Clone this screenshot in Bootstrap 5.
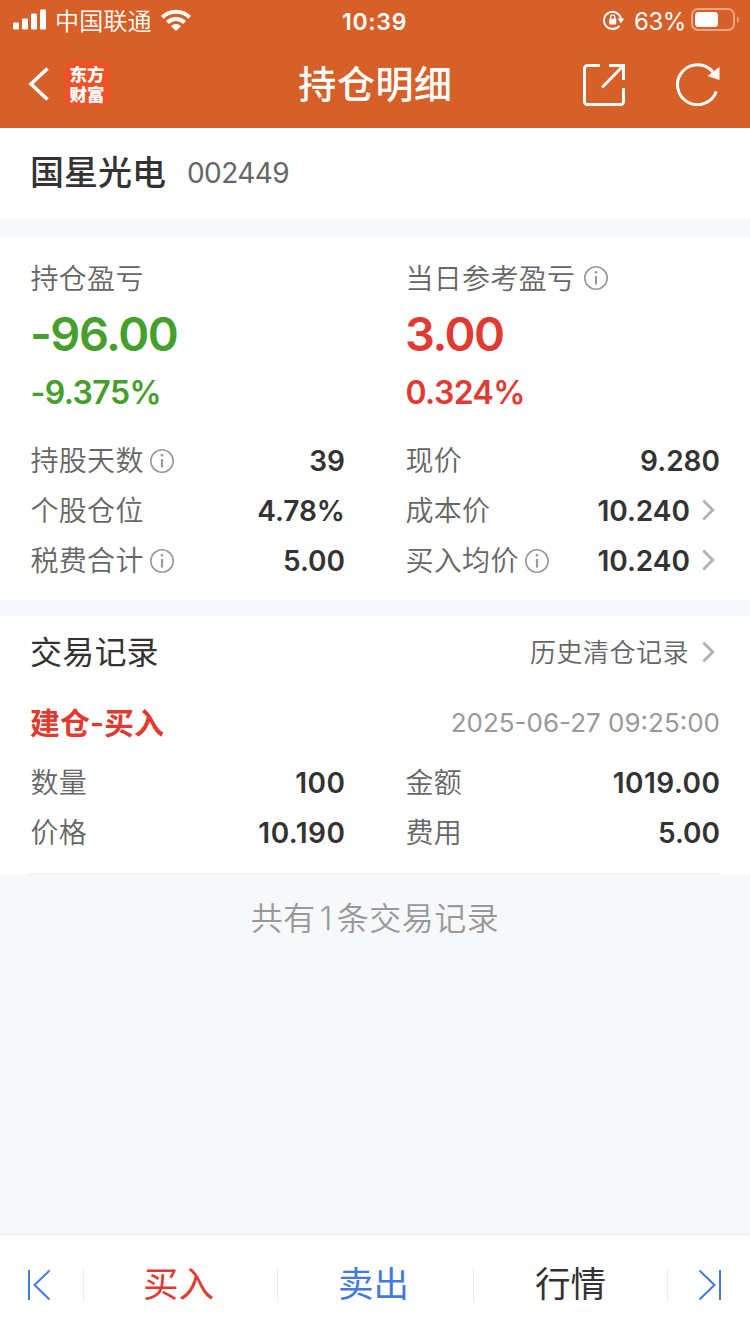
<!DOCTYPE html>
<html lang="zh-CN">
<head>
<meta charset="utf-8">
<meta name="viewport" content="width=device-width, initial-scale=1">
<title>持仓明细</title>
<link rel="stylesheet" href="https://cdn.jsdelivr.net/npm/bootstrap@5.3.0/dist/css/bootstrap.min.css">
<style>
  body { font-family: Inter, "Noto Sans CJK SC", sans-serif; background: #f7f8fa; color: #333; height: 1334px; overflow: hidden; }
  svg { display: block; flex: none; }
  .brand-bg { background: #d75f28; color: #fff; height: 128px; }
  .status-bar { height: 40px; font-size: 24px; line-height: 38px; padding: 0 10px 0 13px; }
  .status-bar span, .clock { padding-top: 3px; }
  .carrier { margin: 0 9px 0 8px; font-weight: 350; letter-spacing: .2px; }
  .clock { font-size: 23px; font-weight: 600; letter-spacing: .7px; margin-right: 4px; }
  .battery-text { margin: 0 5px 0 9px; font-size: 24px; letter-spacing: -.4px; }
  .title-bar { height: 88px; padding: 0 30px 0 28px; }
  .side { flex: 1 1 0; }
  .page-title { font-size: 38px; font-weight: 500; line-height: 88px; letter-spacing: .6px; padding-left: 3px; }
  .logo { width: 46px; height: 46px; border-radius: 9px; background: #ee5226; font: 900 17.5px/20px "Noto Sans CJK SC", sans-serif; padding-top: 3px; margin-left: 14px; }
  .logo div { height: 20px; }
  .share { margin-right: 51px; margin-top: 1px; }
  .panel { background: #fff; padding-left: 30px; padding-right: 30px; }
  .stock { height: 90px; margin-bottom: 20px; }
  .stock-name { font-size: 34px; font-weight: 500; line-height: 90px; height: 90px; }
  .stock-code { font-size: 28px; color: #666; margin-left: 21px; letter-spacing: -.6px; }
  .holding { height: 362px; padding-top: 20px; margin-bottom: 16px; }
  .records { height: 258px; }
  .pair { display: grid; grid-template-columns: 1fr 1fr; column-gap: 60px; }
  .tag { font-size: 28px; color: #666; font-weight: 350; letter-spacing: .3px; white-space: nowrap; padding-top: 2px; padding-left: .5px; }
  .head-line { height: 40px; }
  .big { font-size: 47px; font-weight: 600; line-height: 72px; height: 72px; letter-spacing: -1.5px; }
  .pct { font-size: 32px; font-weight: 600; line-height: 46px; height: 65px; letter-spacing: -.6px; padding-left: .5px; }
  .up { color: #df3b32; }
  .down { color: #469e2d; }
  .sell { color: #437bdb; }
  .item { height: 50px; }
  .item svg { position: relative; top: 1px; }
  .item .info { margin-left: 6px; }
  .head-line .info { margin-left: 9px; }
  .more { margin-left: 12px; margin-right: 4px; }
  .item .more { top: 0; }
  .num { font-size: 28px; font-weight: 600; padding-top: 2px; }
  .loose { letter-spacing: .5px; margin-right: -.5px; }
  .rec-head { height: 72px; }
  .rec-title { font-size: 32px; font-weight: 400; letter-spacing: .2px; padding-top: 2px; }
  .rec-link { font-size: 26px; font-weight: 350; color: #666; letter-spacing: .5px; }
  .rec-head .more { margin-left: 13px; }
  .rec-line { height: 69px; }
  .rec-kind { font-size: 30px; font-weight: 600; padding-top: 1px; }
  .rec-time { font-size: 26px; color: #999; }
  .rec-body { padding-bottom: 16px; border-bottom: 1px solid #ececec; }
  .total { font-size: 32px; font-weight: 350; color: #999; line-height: 90px; letter-spacing: .5px; }
  .total span { margin: 0 4px; }
  .tabs { height: 100px; background: #fff; border-top: 1px solid #e9eaec; font-size: 35.5px; }
  .tab-cell { width: 194px; text-align: center; line-height: 34px; border-left: 1px solid #ececec; }
  .tab-cell.sell { width: 196px; }
  .tab-end { width: 83px; }
  .tab-last { border-left: 1px solid #ececec; }
</style>
</head>
<body class="d-flex flex-column">
<svg class="d-none">
  <symbol id="info" viewBox="0 0 24 24"><circle cx="12" cy="12" r="11.200" fill="none" stroke="#999" stroke-width="1.600"/><circle cx="12" cy="6.300" r="1.300" fill="#999"/><path d="M12 10v8.600" stroke="#999" stroke-width="2.200"/></symbol>
  <symbol id="next" viewBox="0 0 14 22"><path d="M1.300 1.400 10.800 11 1.300 20.600" fill="none" stroke="#b2b2b2" stroke-width="2.800"/></symbol>
</svg>

<header class="brand-bg">
  <div class="status-bar d-flex align-items-center">
    <div class="side d-flex align-items-center">
      <svg width="34" height="22" viewBox="0 0 34 22" fill="#fff"><rect y="13.500" width="6" height="7" rx="1.300"/><rect x="9" y="9.500" width="6" height="11" rx="1.300"/><rect x="18" y="4.500" width="6" height="16" rx="1.300"/><rect x="27" y=".5" width="6" height="20" rx="1.300"/></svg>
      <span class="carrier">中国联通</span>
      <svg width="30" height="22" viewBox="0 0 30 22" fill="none" stroke="#fff" stroke-width="4"><path d="M1.300 8.300a19.400 19.400 0 0 1 27.400 0"/><path d="M6.400 13.500a12.200 12.200 0 0 1 17.200 0"/><path d="M15 22l-5-4.800a7 7 0 0 1 10 0z" fill="#fff" stroke="none"/></svg>
    </div>
    <div class="clock">10:39</div>
    <div class="side d-flex align-items-center justify-content-end">
      <svg width="22" height="20" viewBox="0 0 22 20"><path d="M16.300 15.800A8.600 8.600 0 1 1 18 8.800" fill="none" stroke="#fff" stroke-width="1.900"/><path d="M14.400 8.500h6.800l-3.300 5z" fill="#fff"/><rect x="6.200" y="8.800" width="7" height="5.800" rx=".8" fill="#fff"/><path d="M7.600 9V7a2.100 2.100 0 0 1 4.200 0v2" fill="none" stroke="#fff" stroke-width="1.400"/></svg>
      <span class="battery-text">63%</span>
      <svg width="49" height="24" viewBox="0 0 49 24"><rect x="1" y="1" width="42" height="21" rx="6" fill="none" stroke="#e8a585" stroke-width="2"/><rect x="4" y="4" width="23" height="15" rx="3.500" fill="#fff"/><path d="M46 8v7q2-1 2-3.500T46 8z" fill="#e8a585"/></svg>
    </div>
  </div>
  <div class="title-bar d-flex align-items-center">
    <div class="side d-flex align-items-center">
      <svg width="22" height="36" viewBox="0 0 22 36"><path d="M19.500 2.500 3 18l16.500 15.500" fill="none" stroke="#fff" stroke-width="3.600"/></svg>
      <div class="logo text-center"><div>东方</div><div>财富</div></div>
    </div>
    <h1 class="page-title m-0">持仓明细</h1>
    <div class="side d-flex align-items-center justify-content-end">
      <svg class="share" width="42" height="42" viewBox="0 0 42 42" fill="none" stroke="#fff" stroke-width="3"><path d="M17 1.500H4.500a3 3 0 0 0-3 3v33a3 3 0 0 0 3 3h33a3 3 0 0 0 3-3V24"/><path d="M26 1.500h14.500V16M40 2 19 23.500"/></svg>
      <svg width="44" height="44" viewBox="0 0 44 44"><path d="M40.300 29.500A20 20 0 1 1 37 10" fill="none" stroke="#fff" stroke-width="3"/><path d="M43.500 5v13L31.500 14z" fill="#fff"/></svg>
    </div>
  </div>
</header>

<section class="panel stock d-flex align-items-center">
  <span class="stock-name">国星光电</span><span class="stock-code">002449</span>
</section>

<section class="panel holding">
  <div class="pair">
    <div>
      <div class="head-line d-flex align-items-center"><span class="tag">持仓盈亏</span></div>
      <div class="big down">-96.00</div>
      <div class="pct down">-9.375%</div>
    </div>
    <div>
      <div class="head-line d-flex align-items-center"><span class="tag">当日参考盈亏</span><svg class="info" width="24" height="24"><use href="#info"/></svg></div>
      <div class="big up">3.00</div>
      <div class="pct up">0.324%</div>
    </div>
  </div>
  <div class="pair">
    <div class="item d-flex align-items-center"><span class="tag">持股天数</span><svg class="info" width="24" height="24"><use href="#info"/></svg><span class="num ms-auto">39</span></div>
    <div class="item d-flex align-items-center"><span class="tag">现价</span><span class="num ms-auto">9.280</span></div>
    <div class="item d-flex align-items-center"><span class="tag">个股仓位</span><span class="num ms-auto">4.78%</span></div>
    <div class="item d-flex align-items-center"><span class="tag">成本价</span><span class="num ms-auto">10.240</span><svg class="more" width="14" height="22"><use href="#next"/></svg></div>
    <div class="item d-flex align-items-center"><span class="tag">税费合计</span><svg class="info" width="24" height="24"><use href="#info"/></svg><span class="num ms-auto">5.00</span></div>
    <div class="item d-flex align-items-center"><span class="tag">买入均价</span><svg class="info" width="24" height="24"><use href="#info"/></svg><span class="num ms-auto">10.240</span><svg class="more" width="14" height="22"><use href="#next"/></svg></div>
  </div>
</section>

<section class="panel records">
  <div class="rec-head d-flex align-items-center"><span class="rec-title">交易记录</span><span class="rec-link ms-auto">历史清仓记录</span><svg class="more" width="14" height="22"><use href="#next"/></svg></div>
  <div class="rec-line d-flex align-items-center"><span class="rec-kind up">建仓-买入</span><span class="rec-time ms-auto">2025-06-27 09:25:00</span></div>
  <div class="pair rec-body">
    <div class="item d-flex align-items-center"><span class="tag">数量</span><span class="num loose ms-auto">100</span></div>
    <div class="item d-flex align-items-center"><span class="tag">金额</span><span class="num loose ms-auto">1019.00</span></div>
    <div class="item d-flex align-items-center"><span class="tag">价格</span><span class="num loose ms-auto">10.190</span></div>
    <div class="item d-flex align-items-center"><span class="tag">费用</span><span class="num ms-auto">5.00</span></div>
  </div>
</section>

<div class="total text-center">共有<span>1</span>条交易记录</div>

<nav class="tabs d-flex align-items-center mt-auto">
  <div class="tab-end"><svg class="ms-auto" width="56" height="32" viewBox="0 0 56 32" fill="none" stroke="#437bdb" stroke-width="2"><path d="M2 1v30M22.500 1.500 7.500 16 22.500 30.500"/></svg></div>
  <div class="tab-cell up pe-1">买入</div>
  <div class="tab-cell sell pe-1">卖出</div>
  <div class="tab-cell">行情</div>
  <div class="tab-end tab-last"><svg width="56" height="32" viewBox="-30 0 56 32" fill="none" stroke="#437bdb" stroke-width="2"><path d="M22 1v30M1.500 1.500 16.500 16 1.500 30.500"/></svg></div>
</nav>
<script src="https://cdn.jsdelivr.net/npm/bootstrap@5.3.0/dist/js/bootstrap.bundle.min.js"></script>
</body>
</html>
